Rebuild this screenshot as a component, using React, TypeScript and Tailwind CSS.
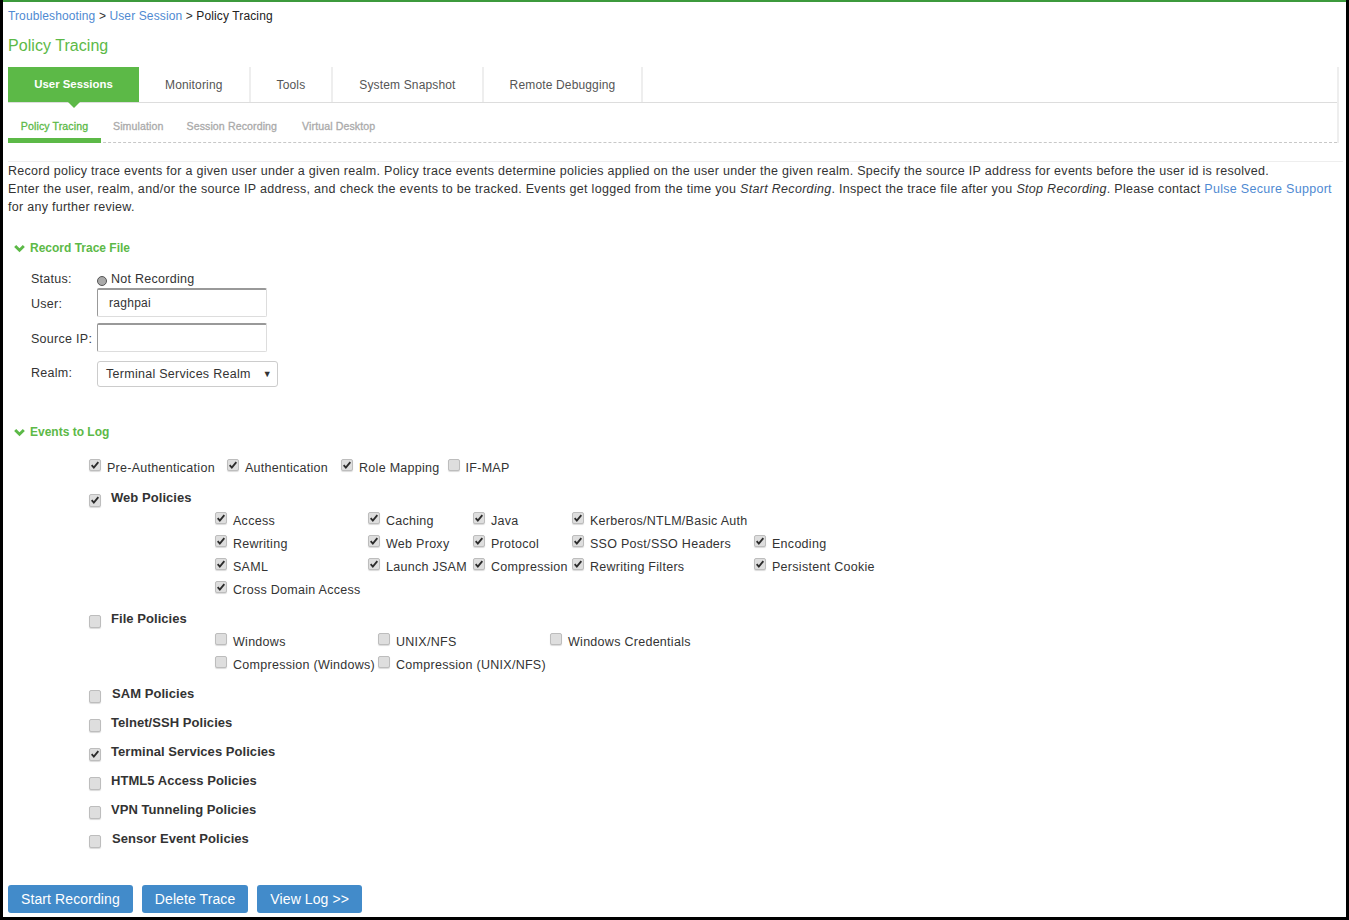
function Box({ checked = false, big = false }: { checked?: boolean; big?: boolean }) {
  return (
    <span
      className={`flex shrink-0 items-center justify-center rounded-[2px] border border-[#bdbdbd] bg-[#dedede] shadow-[0_1px_1px_rgba(0,0,0,0.15)] ${big ? 'h-[13px] w-[12px]' : 'h-[12px] w-[12px]'}`}
    >
      {checked && (
        <svg viewBox="0 0 12 12" className="h-[10px] w-[10px]">
          <path d="M2 6.2 L4.6 9 L10 2.6" fill="none" stroke="#2b2b2b" strokeWidth="2.2" />
        </svg>
      )}
    </span>
  )
}

function Opt({ label, checked = false, className = '' }: { label: string; checked?: boolean; className?: string }) {
  return (
    <div className={`flex h-[23px] items-center whitespace-nowrap ${className}`}>
      <div className="-mt-[5px]">
        <Box checked={checked} />
      </div>
      <span className="ml-[6px] mt-[1px]">{label}</span>
    </div>
  )
}

function Policy({ label, checked = false, className = '', labelClass = '' }: { label: string; checked?: boolean; className?: string; labelClass?: string }) {
  return (
    <div className={`flex h-[29px] items-center ${className}`}>
      <div className="ml-[81px] mt-[3px] w-[22px]">
        <Box checked={checked} big />
      </div>
      <span className={`-mt-[1px] text-[13px] font-bold tracking-[0.05px] text-[#333] ${labelClass}`}>{label}</span>
    </div>
  )
}

function SectionHead({ label }: { label: string }) {
  return (
    <div className="flex items-center pl-[6px] text-[12px] font-bold tracking-normal text-[#5cb947]">
      <svg viewBox="0 0 12 10" className="h-[9px] w-[11px]">
        <path d="M1.2 2.2 L6 7 L10.8 2.2" fill="none" stroke="#5cb947" strokeWidth="3.2" />
      </svg>
      <span className="ml-[5px]">{label}</span>
    </div>
  )
}

function Tab({ label }: { label: string }) {
  return (
    <div className="flex h-[35px] items-center border-r-2 border-[#eeeeee] px-[26px] text-[12px] tracking-[0.15px] text-[#555]">
      {label}
    </div>
  )
}

function SubTab({ label, className = '' }: { label: string; className?: string }) {
  return <span className={`pt-[8px] text-[#aaa] [-webkit-text-stroke:0.3px] ${className}`}>{label}</span>
}

function Btn({ label }: { label: string }) {
  return (
    <button className="h-[28px] rounded-[3px] bg-[#428bca] px-[13px] text-[14px] tracking-[0.1px] text-white">{label}</button>
  )
}

export default function App() {
  return (
    <div
      className="h-[920px] w-[1349px] overflow-hidden bg-black pb-[3px] pl-[3px] pr-[3px]"
      style={{ fontFamily: '"Liberation Sans", Arial, sans-serif' }}
    >
      <div className="h-full border-t-2 border-[#3c9a3c] bg-white pl-[5px] text-[12.5px] tracking-[0.28px] text-[#333]">
        {/* Breadcrumb */}
        <div className="pt-[7px] text-[12px] leading-[14px] tracking-[0.12px]">
          <span className="text-[#4f8ad2]">Troubleshooting</span> &gt; <span className="text-[#4f8ad2]">User Session</span> &gt;{' '}
          <span className="text-[#222]">Policy Tracing</span>
        </div>
        <h1 className="mt-[13px] text-[16px] leading-[20px] tracking-[0.05px] text-[#5cb947]">Policy Tracing</h1>

        {/* Tabs */}
        <div className="mt-[11px] mr-[7px] border-r-2 border-[#eeeeee]">
          <div className="flex border-b border-[#dddddd]">
            <div className="relative flex h-[35px] w-[131px] items-center justify-center bg-[#5cb947] text-[11.4px] font-bold tracking-normal text-white">
              User Sessions
              <span className="absolute left-[60px] top-[35px] h-0 w-0 border-x-[6px] border-t-[6px] border-x-transparent border-t-[#5cb947]" />
            </div>
            <Tab label="Monitoring" />
            <Tab label="Tools" />
            <Tab label="System Snapshot" />
            <Tab label="Remote Debugging" />
          </div>
          <div className="flex h-[40px] items-center border-b border-dashed border-[#c8c8c8] text-[10.6px] tracking-[0.1px]">
            <div className="relative flex h-full w-[93px] items-center justify-center pt-[8px] text-[#5cb947] [-webkit-text-stroke:0.3px]">
              Policy Tracing
              <span className="absolute bottom-[-1px] left-0 h-[5px] w-full bg-[#5cb947]" />
            </div>
            <SubTab label="Simulation" className="ml-[12px]" />
            <SubTab label="Session Recording" className="ml-[23px]" />
            <SubTab label="Virtual Desktop" className="ml-[25px]" />
          </div>
        </div>

        {/* Description */}
        <div className="mt-[18px] mr-[3px] border-t border-[#eeeeee] leading-[18px]">
          <div>Record policy trace events for a given user under a given realm. Policy trace events determine policies applied on the user under the given realm. Specify the source IP address for events before the user id is resolved.</div>
          <div className="tracking-[0.3px]">
            Enter the user, realm, and/or the source IP address, and check the events to be tracked. Events get logged from the time you <em>Start Recording</em>. Inspect the trace file after you <em>Stop Recording</em>. Please contact{' '}
            <span className="text-[#4f8ad2]">Pulse Secure Support</span>
          </div>
          <div>for any further review.</div>
        </div>

        <div className="mt-[23px]">
          <SectionHead label="Record Trace File" />
        </div>

        {/* Form */}
        <div className="mt-[14px] pl-[23px]">
          <div className="flex h-[17px] items-center">
            <span className="w-[66px]">Status:</span>
            <span className="mt-[2px] h-[10px] w-[10px] rounded-full border border-[#555] bg-[#aaa]" />
            <span className="ml-[4px]">Not Recording</span>
          </div>
          <div className="flex h-[29px] items-center">
            <span className="mt-[3px] w-[66px]">User:</span>
            <div className="h-[29px] w-[170px] rounded-[2px] border border-[#ddd] border-l-[#999] border-t-2 border-t-[#999] pl-[11px] pt-[4px] text-[12px]">raghpai</div>
          </div>
          <div className="mt-[6px] flex h-[29px] items-center">
            <span className="mt-[4px] w-[66px]">Source IP:</span>
            <div className="h-[29px] w-[170px] rounded-[2px] border border-[#ddd] border-l-[#999] border-t-2 border-t-[#999]" />
          </div>
          <div className="mt-[9px] flex h-[26px] items-center">
            <span className="-mt-[2px] w-[66px]">Realm:</span>
            <div className="flex h-[26px] w-[181px] items-center justify-between rounded-[3px] border border-[#ccc] pl-[8px] pr-[5px] pt-[1px]">
              <span>Terminal Services Realm</span>
              <span className="text-[9px]">▼</span>
            </div>
          </div>
        </div>

        <div className="mt-[36px]">
          <SectionHead label="Events to Log" />
        </div>

        {/* Events */}
        <div className="ml-[81px] mt-[15px] flex gap-[12px]">
          <Opt label="Pre-Authentication" checked />
          <Opt label="Authentication" checked />
          <Opt label="Role Mapping" checked className="ml-[1px]" />
          <Opt label="IF-MAP" className="-ml-[4px]" />
        </div>

        <Policy label="Web Policies" checked className="mt-[5px]" />
        <div className="-mt-[4px] ml-[207px] grid grid-cols-[153px_105px_99px_182px_auto]">
          <Opt label="Access" checked />
          <Opt label="Caching" checked />
          <Opt label="Java" checked />
          <Opt label="Kerberos/NTLM/Basic Auth" checked />
          <span />
          <Opt label="Rewriting" checked />
          <Opt label="Web Proxy" checked />
          <Opt label="Protocol" checked />
          <Opt label="SSO Post/SSO Headers" checked />
          <Opt label="Encoding" checked />
          <Opt label="SAML" checked />
          <Opt label="Launch JSAM" checked />
          <Opt label="Compression" checked />
          <Opt label="Rewriting Filters" checked />
          <Opt label="Persistent Cookie" checked />
          <Opt label="Cross Domain Access" checked />
        </div>

        <Policy label="File Policies" className="mt-[4px]" />
        <div className="-mt-[4px] ml-[207px] grid grid-cols-[163px_172px_auto]">
          <Opt label="Windows" />
          <Opt label="UNIX/NFS" />
          <Opt label="Windows Credentials" />
          <Opt label="Compression (Windows)" />
          <Opt label="Compression (UNIX/NFS)" />
        </div>

        <Policy label="SAM Policies" className="mt-[4px]" labelClass="ml-[1px]" />
        <Policy label="Telnet/SSH Policies" />
        <Policy label="Terminal Services Policies" checked />
        <Policy label="HTML5 Access Policies" />
        <Policy label="VPN Tunneling Policies" />
        <Policy label="Sensor Event Policies" labelClass="ml-[1px]" />

        {/* Actions */}
        <div className="mt-[31px] flex gap-[9px]">
          <Btn label="Start Recording" />
          <Btn label="Delete Trace" />
          <Btn label="View Log >>" />
        </div>
      </div>
    </div>
  )
}
